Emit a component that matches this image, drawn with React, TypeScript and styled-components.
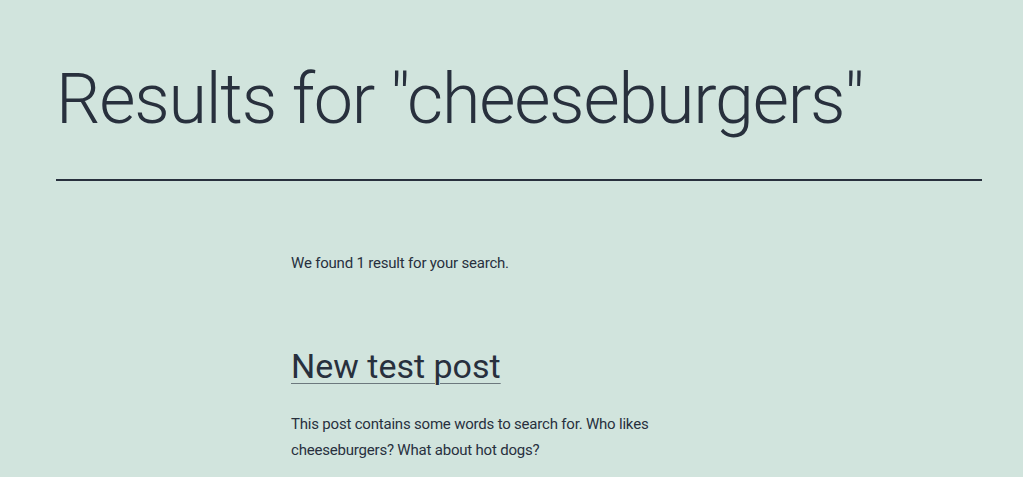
import React from "react";
import styled, { createGlobalStyle } from "styled-components";

const GlobalStyle = createGlobalStyle`
  html,
  body {
    margin: 0;
    background: #d1e4dd;
    color: #28303d;
    font-family: Roboto, "Noto Sans", sans-serif;
  }
`;

type Result = {
  id: number;
  title: string;
  excerpt: string;
};

const results: Result[] = [
  {
    id: 1,
    title: "New test post",
    excerpt:
      "This post contains some words to search for. Who likes cheeseburgers? What about hot dogs?"
  }
];

export default function App() {
  const query = "cheeseburgers";
  return (
    <>
      <GlobalStyle />
      <Header>
        <PageTitle>Results for "{query}"</PageTitle>
      </Header>
      <Main>
        <Summary>
          We found {results.length} result{results.length === 1 ? "" : "s"} for
          your search.
        </Summary>
        {results.map(({ id, title, excerpt }) => (
          <Entry key={id}>
            <EntryTitle>
              <EntryLink href="#">{title}</EntryLink>
            </EntryTitle>
            <Excerpt>{excerpt}</Excerpt>
          </Entry>
        ))}
      </Main>
    </>
  );
}

const Header = styled.header`
  margin: 0 41px 0 56px;
  padding-top: 64px;
  padding-bottom: 45px;
  border-bottom: 2px solid #28303d;
`;

const PageTitle = styled.h1`
  margin: 0;
  font-size: 70px;
  font-weight: 300;
  line-height: 70px;
  letter-spacing: -1.2px;
`;

const Main = styled.main`
  max-width: 441px;
  margin: 0 auto;
  padding-top: 70px;
`;

const Summary = styled.p`
  margin: 0;
  font-size: 15px;
  line-height: 25.5px;
  letter-spacing: -0.2px;
`;

const Entry = styled.article`
  margin-top: 67px;
`;

const EntryTitle = styled.h2`
  margin: 0;
  font-size: 34px;
  font-weight: 400;
  line-height: 1.3;
`;

const EntryLink = styled.a`
  color: #28303d;
  text-decoration: underline;
  text-decoration-thickness: 1px;
  text-decoration-color: rgba(40, 48, 61, 0.6);
  text-underline-offset: 5px;
`;

const Excerpt = styled.p`
  margin: 23px 0 0;
  font-size: 15px;
  line-height: 26px;
  letter-spacing: -0.2px;
`;
